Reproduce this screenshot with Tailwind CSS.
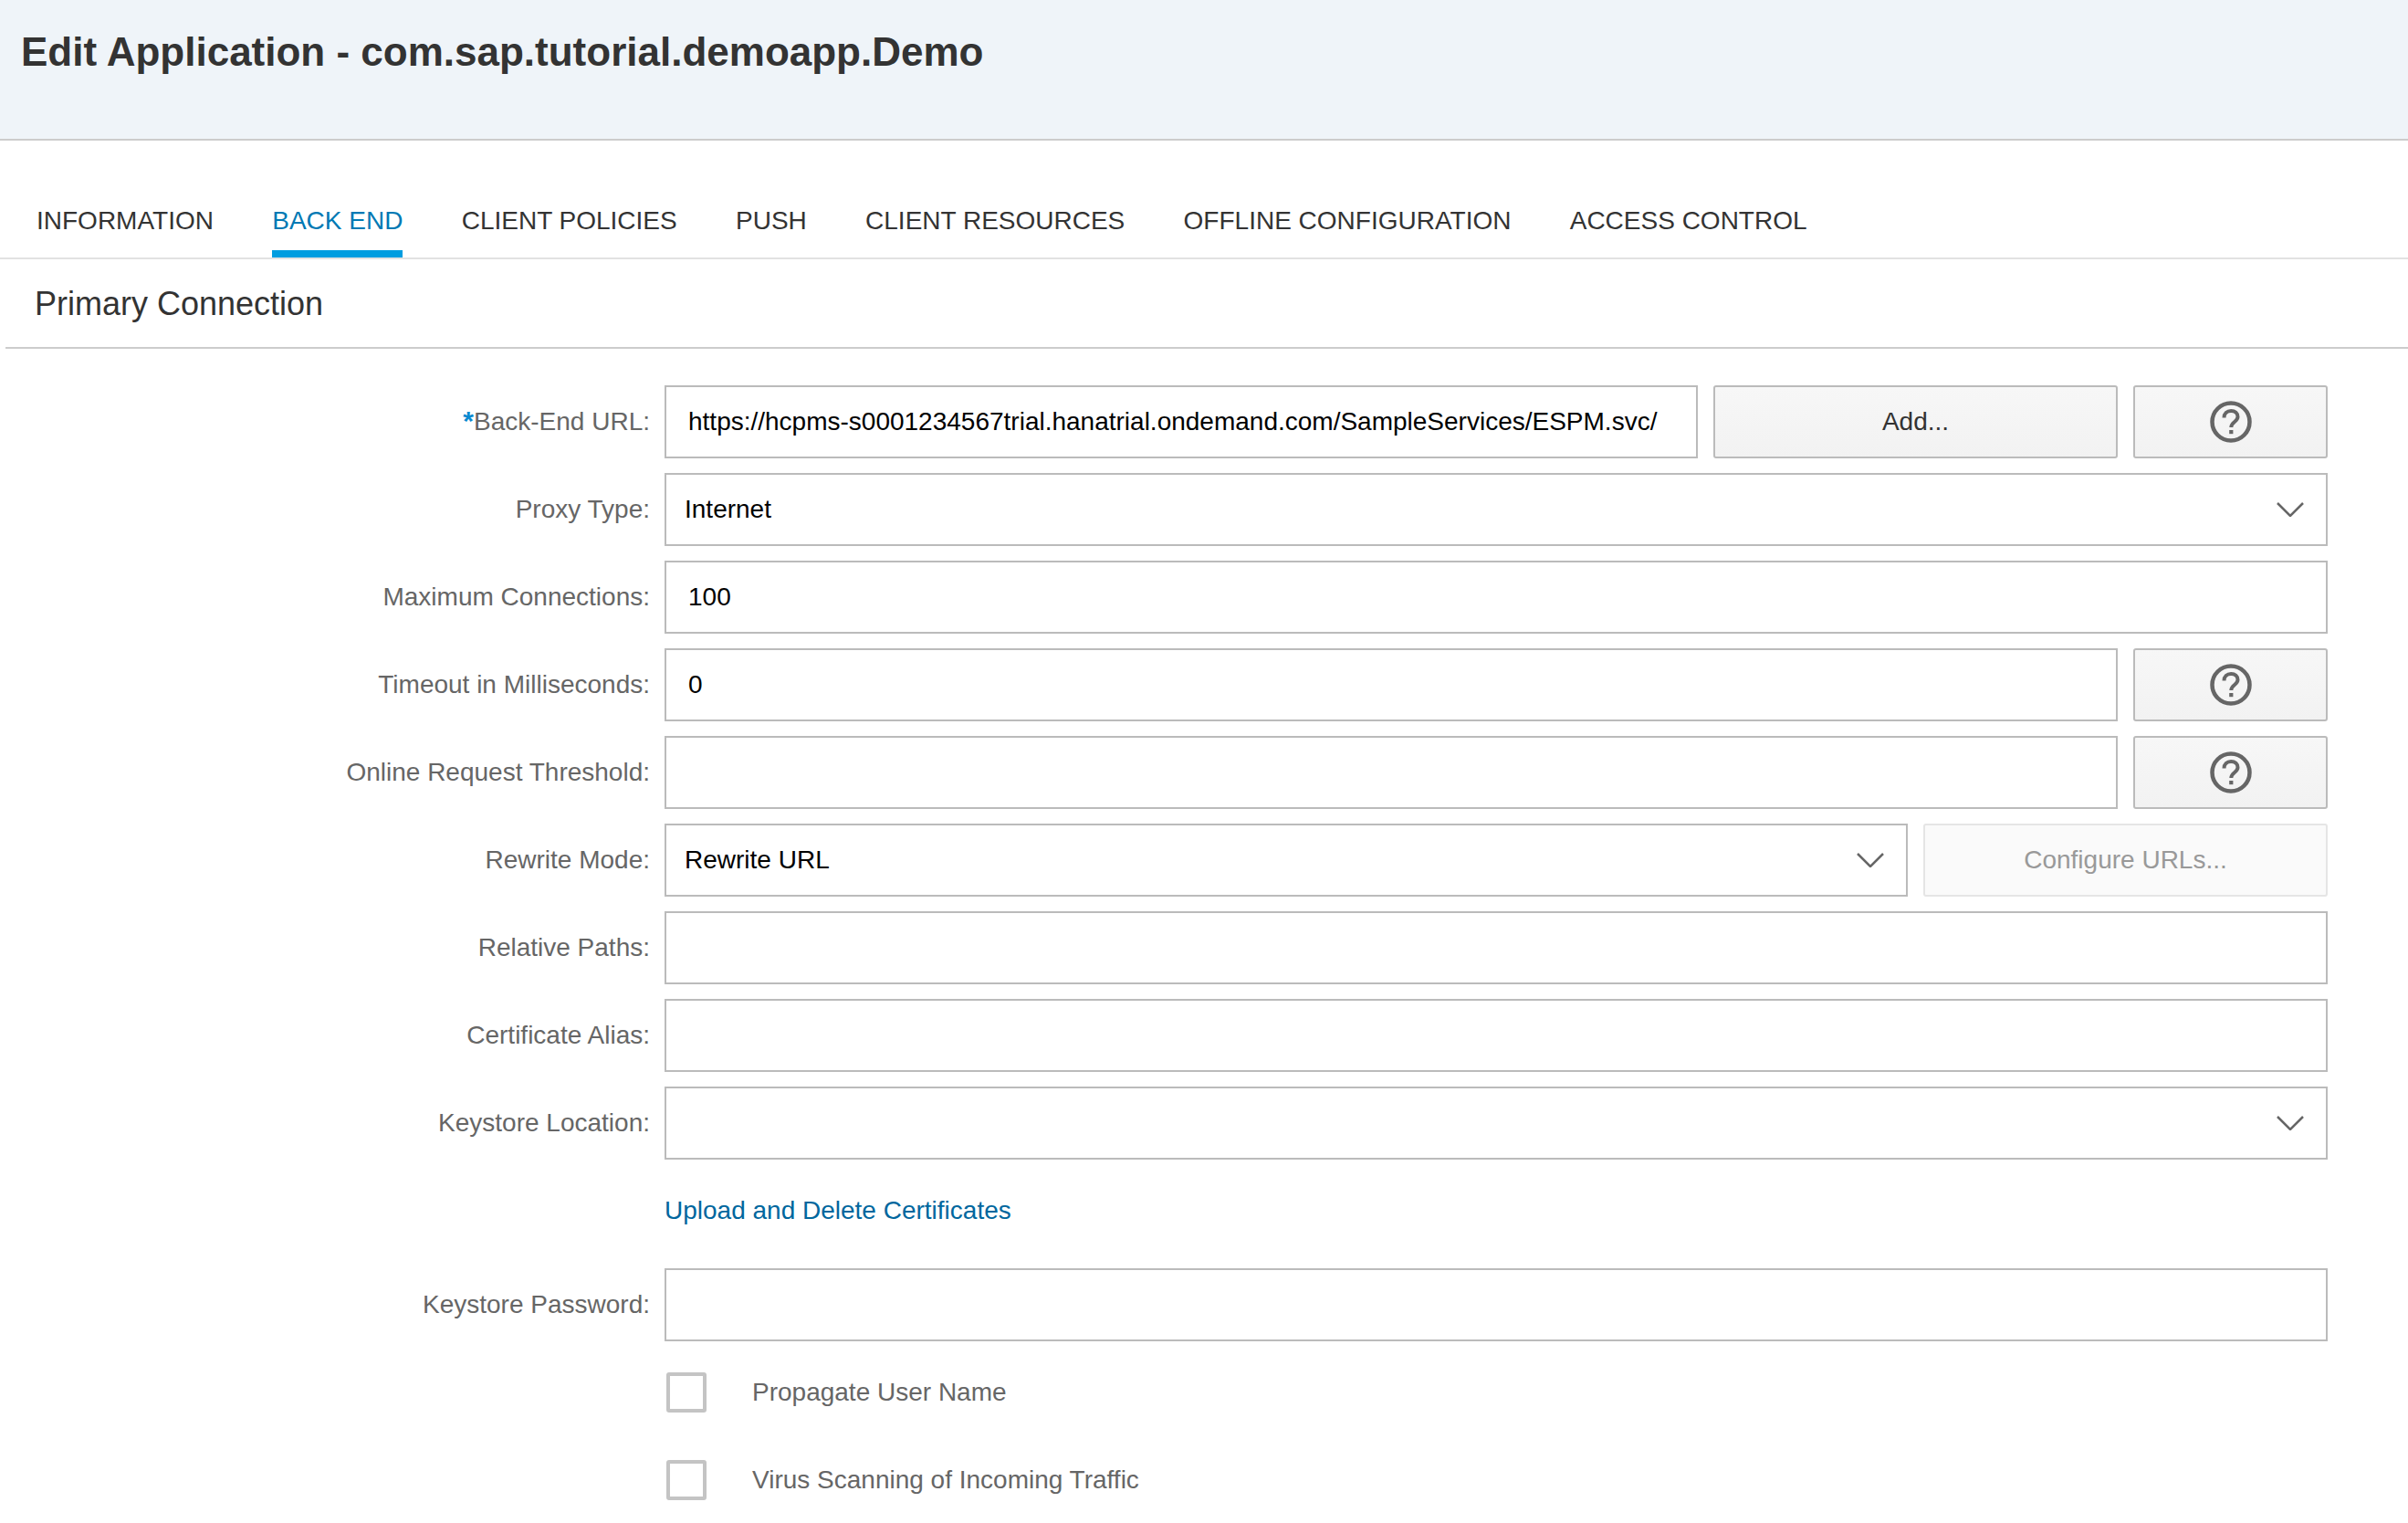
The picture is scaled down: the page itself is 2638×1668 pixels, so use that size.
<!DOCTYPE html>
<html lang="en">
<head>
  <meta charset="UTF-8" />
  <title>Edit Application - com.sap.tutorial.demoapp.Demo</title>
  <script src="https://cdn.jsdelivr.net/npm/@tailwindcss/browser@4"></script>
</head>
<body class="bg-white h-[1668px] overflow-hidden font-['Liberation_Sans',Arial,sans-serif] text-[28px] text-[#666]">
  <!-- Title bar -->
  <header class="h-[154px] bg-[#eff4f9] border-b-2 border-[#ccc] pl-[23px] pt-[30px]">
    <h1 class="text-[44px] leading-[54px] font-bold text-[#333]">Edit Application - com.sap.tutorial.demoapp.Demo</h1>
  </header>

  <!-- Tabs -->
  <nav class="h-[130px] flex items-end gap-[64.3px] pl-[40px] border-b-2 border-[#e2e2e2] text-[28px] text-[#333]">
    <a class="h-[64px] pt-[3px]">INFORMATION</a>
    <a class="h-[64px] pt-[3px] text-[#0079b4] border-b-8 border-[#009de0]">BACK END</a>
    <a class="h-[64px] pt-[3px]">CLIENT POLICIES</a>
    <a class="h-[64px] pt-[3px]">PUSH</a>
    <a class="h-[64px] pt-[3px]">CLIENT RESOURCES</a>
    <a class="h-[64px] pt-[3px]">OFFLINE CONFIGURATION</a>
    <a class="h-[64px] pt-[3px]">ACCESS CONTROL</a>
  </nav>

  <!-- Section heading -->
  <h2 class="ml-[6px] pl-[32px] h-[98px] pt-[2px] flex items-center border-b-2 border-[#ccc] text-[36px] text-[#333]">Primary Connection</h2>

  <!-- Form -->
  <main class="pt-[40px] pr-[88px] grid grid-cols-[712px_1fr] gap-x-[16px] gap-y-[16px] items-center">
    <label class="text-right"><span class="text-[#0a8ad0] font-bold text-[30px] leading-none">*</span>Back-End URL:</label>
    <div class="flex gap-[17px]">
      <div class="flex-1 h-[80px] flex items-center pl-[24px] border-2 border-[#bbb] text-black">https://hcpms-s0001234567trial.hanatrial.ondemand.com/SampleServices/ESPM.svc/</div>
      <button class="w-[443px] h-[80px] rounded-[3px] border-2 border-[#bbb] bg-gradient-to-b from-[#f7f7f7] to-[#f2f2f2] text-[#333]">Add...</button>
      <button class="w-[213px] h-[80px] rounded-[3px] border-2 border-[#bbb] bg-gradient-to-b from-[#f7f7f7] to-[#f2f2f2] flex items-center justify-center">
        <svg class="w-[46px] h-[46px]" viewBox="0 0 46 46" fill="none" stroke="#666" stroke-width="4.500"><circle cx="23" cy="23" r="20.500"/><path d="M15.500 18.500c0-4.500 3.300-7.500 7.700-7.500 4.300 0 7.300 2.700 7.300 6.500 0 5.500-7.200 5.500-7.200 11.500" stroke-width="4"/><path d="M21.200 32h4.200v4.200h-4.200z" fill="#666" stroke="none"/></svg>
      </button>
    </div>

    <label class="text-right">Proxy Type:</label>
    <div class="h-[80px] flex items-center justify-between pl-[20px] pr-[24px] border-2 border-[#bbb] text-black">
      Internet
      <svg class="w-[30px] h-[16px]" viewBox="0 0 30 16" fill="none" stroke="#666" stroke-width="2.500"><path d="M1 1l14 14L29 1"/></svg>
    </div>

    <label class="text-right">Maximum Connections:</label>
    <div class="h-[80px] flex items-center pl-[24px] border-2 border-[#bbb] text-black">100</div>

    <label class="text-right">Timeout in Milliseconds:</label>
    <div class="flex gap-[17px]">
      <div class="flex-1 h-[80px] flex items-center pl-[24px] border-2 border-[#bbb] text-black">0</div>
      <button class="w-[213px] h-[80px] rounded-[3px] border-2 border-[#bbb] bg-gradient-to-b from-[#f7f7f7] to-[#f2f2f2] flex items-center justify-center">
        <svg class="w-[46px] h-[46px]" viewBox="0 0 46 46" fill="none" stroke="#666" stroke-width="4.500"><circle cx="23" cy="23" r="20.500"/><path d="M15.500 18.500c0-4.500 3.300-7.500 7.700-7.500 4.300 0 7.300 2.700 7.300 6.500 0 5.500-7.200 5.500-7.200 11.500" stroke-width="4"/><path d="M21.200 32h4.200v4.200h-4.200z" fill="#666" stroke="none"/></svg>
      </button>
    </div>

    <label class="text-right">Online Request Threshold:</label>
    <div class="flex gap-[17px]">
      <div class="flex-1 h-[80px] border-2 border-[#bbb]"></div>
      <button class="w-[213px] h-[80px] rounded-[3px] border-2 border-[#bbb] bg-gradient-to-b from-[#f7f7f7] to-[#f2f2f2] flex items-center justify-center">
        <svg class="w-[46px] h-[46px]" viewBox="0 0 46 46" fill="none" stroke="#666" stroke-width="4.500"><circle cx="23" cy="23" r="20.500"/><path d="M15.500 18.500c0-4.500 3.300-7.500 7.700-7.500 4.300 0 7.300 2.700 7.300 6.500 0 5.500-7.200 5.500-7.200 11.500" stroke-width="4"/><path d="M21.200 32h4.200v4.200h-4.200z" fill="#666" stroke="none"/></svg>
      </button>
    </div>

    <label class="text-right">Rewrite Mode:</label>
    <div class="flex gap-[17px]">
      <div class="flex-1 h-[80px] flex items-center justify-between pl-[20px] pr-[24px] border-2 border-[#bbb] text-black">
        Rewrite URL
        <svg class="w-[30px] h-[16px]" viewBox="0 0 30 16" fill="none" stroke="#666" stroke-width="2.500"><path d="M1 1l14 14L29 1"/></svg>
      </div>
      <button class="w-[443px] h-[80px] rounded-[3px] border-2 border-[#e5e5e5] bg-[#fafafa] text-[#999]">Configure URLs...</button>
    </div>

    <label class="text-right">Relative Paths:</label>
    <div class="h-[80px] border-2 border-[#bbb]"></div>

    <label class="text-right">Certificate Alias:</label>
    <div class="h-[80px] border-2 border-[#bbb]"></div>

    <label class="text-right">Keystore Location:</label>
    <div class="h-[80px] flex items-center justify-end pr-[24px] border-2 border-[#bbb]">
      <svg class="w-[30px] h-[16px]" viewBox="0 0 30 16" fill="none" stroke="#666" stroke-width="2.500"><path d="M1 1l14 14L29 1"/></svg>
    </div>

    <div></div>
    <a class="h-[87px] pb-[8px] flex items-center text-[#00679e]">Upload and Delete Certificates</a>

    <label class="text-right">Keystore Password:</label>
    <div class="h-[80px] border-2 border-[#bbb]"></div>

    <div></div>
    <div class="h-[80px] flex items-center pl-[2px] gap-[50px]">
      <span class="w-[44px] h-[44px] rounded-[3px] border-4 border-[#c4c4c4]"></span>
      <span>Propagate User Name</span>
    </div>

    <div></div>
    <div class="h-[80px] flex items-center pl-[2px] gap-[50px]">
      <span class="w-[44px] h-[44px] rounded-[3px] border-4 border-[#c4c4c4]"></span>
      <span>Virus Scanning of Incoming Traffic</span>
    </div>
  </main>
</body>
</html>
